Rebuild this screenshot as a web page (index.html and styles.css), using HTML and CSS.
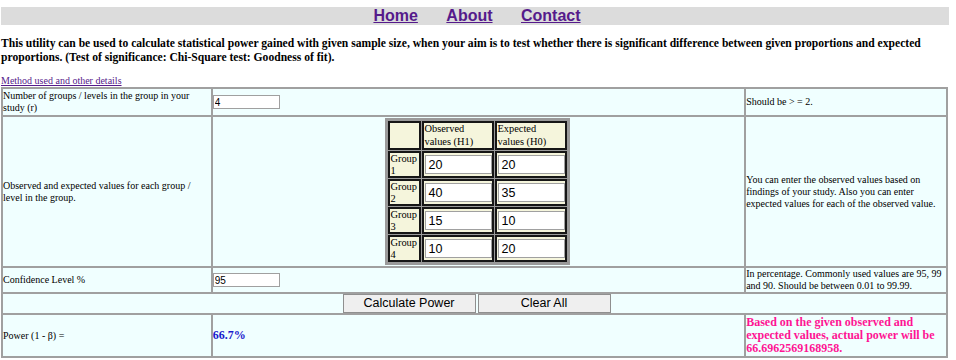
FILE: index.html
```html
<!DOCTYPE html>
<html>
<head>
<meta charset="utf-8">
<title>Statistical Power</title>
<link rel="stylesheet" href="styles.css">
</head>
<body>
<div class="page">
  <div class="nav">
    <a href="#" class="nav-link">Home</a>
    <a href="#" class="nav-link">About</a>
    <a href="#" class="nav-link">Contact</a>
  </div>
  <p class="intro">This utility can be used to calculate statistical power gained with given sample size, when your aim is to test whether there is significant difference between given proportions and expected proportions. (Test of significance: Chi-Square test: Goodness of fit).</p>
  <div class="method"><a href="#" class="method-link">Method used and other details</a></div>
  <table class="main">
    <tr class="r1">
      <td class="c1">Number of groups / levels in the group in your study (r)</td>
      <td class="c2"><input class="small-input" type="text" value="4"></td>
      <td class="c3">Should be &gt; = 2.</td>
    </tr>
    <tr>
      <td class="c1">Observed and expected values for each group / level in the group.</td>
      <td class="c2 center">
        <table class="inner">
          <tr class="ihead">
            <td class="ilabel"></td>
            <td class="ilabel">Observed<br>values (H1)</td>
            <td class="ilabel">Expected<br>values (H0)</td>
          </tr>
          <tr>
            <td class="ilabel">Group<br>1</td>
            <td class="icell"><input class="val-input" type="text" value="20"></td>
            <td class="icell"><input class="val-input" type="text" value="20"></td>
          </tr>
          <tr>
            <td class="ilabel">Group<br>2</td>
            <td class="icell"><input class="val-input" type="text" value="40"></td>
            <td class="icell"><input class="val-input" type="text" value="35"></td>
          </tr>
          <tr>
            <td class="ilabel">Group<br>3</td>
            <td class="icell"><input class="val-input" type="text" value="15"></td>
            <td class="icell"><input class="val-input" type="text" value="10"></td>
          </tr>
          <tr>
            <td class="ilabel">Group<br>4</td>
            <td class="icell"><input class="val-input" type="text" value="10"></td>
            <td class="icell"><input class="val-input" type="text" value="20"></td>
          </tr>
        </table>
      </td>
      <td class="c3">You can enter the observed values based on findings of your study. Also you can enter expected values for each of the observed value.</td>
    </tr>
    <tr class="r3">
      <td class="c1">Confidence Level %</td>
      <td class="c2"><input class="small-input" type="text" value="95"></td>
      <td class="c3">In percentage. Commonly used values are 95, 99 and 90. Should be between 0.01 to 99.99.</td>
    </tr>
    <tr>
      <td colspan="3" class="buttons"><button class="btn" type="button">Calculate Power</button><button class="btn" type="button">Clear All</button></td>
    </tr>
    <tr class="r5">
      <td class="c1">Power (1 - β) =</td>
      <td class="c2"><span class="result">66.7%</span></td>
      <td class="c3"><span class="note">Based on the given observed and expected values, actual power will be 66.6962569168958.</span></td>
    </tr>
  </table>
</div>
</body>
</html>
```

FILE: styles.css
```css
html, body {
  margin: 0;
  padding: 0;
  background: #ffffff;
}
body {
  font-family: "Liberation Serif", "Times New Roman", serif;
  color: #000;
}
.page {
  width: 948px;
  margin-left: 1px;
  padding-top: 7px;
}
.nav {
  background: #dcdcdc;
  height: 18px;
  line-height: 18px;
  text-align: center;
  font-family: "Liberation Sans", Arial, sans-serif;
  font-size: 16px;
  font-weight: bold;
  padding-left: 4px;
}
.nav-link {
  color: #551a8b;
  text-decoration: underline;
  margin: 0 12px;
}
.intro {
  margin: 12px 0 0 0;
  font-size: 11.6px;
  font-weight: bold;
  line-height: 14px;
}
.method {
  margin-top: 10px;
  font-size: 10px;
  line-height: 12px;
  height: 12px;
}
.method-link {
  color: #551a8b;
}
.main {
  width: 947px;
  border-collapse: separate;
  border-spacing: 0;
  border: 1px solid #a0a0a0;
  background: #f0ffff;
  font-size: 10px;
  line-height: 12px;
}
.main > tbody > tr > td {
  border: 1px solid #a0a0a0;
  padding: 1px 1px 1px 0;
  vertical-align: middle;
}
.main > tbody > tr.r3 > td {
  padding-top: 0;
  padding-bottom: 0;
}
.c1 { width: 207px; }
.c2 { width: 531px; }
.c3 { width: 199px; }
.center { text-align: center; }
.small-input {
  width: 63px;
  height: 12px;
  border: 1px solid #a0a0a0;
  padding: 0 1px;
  margin: 0;
  font-family: "Liberation Sans", Arial, sans-serif;
  font-size: 10px;
  background: #fff;
  vertical-align: middle;
}
.inner {
  margin: 0 auto;
  border: 2px solid #9a9a9a;
  border-collapse: separate;
  border-spacing: 1px;
  background: #9a9a9a;
  text-align: left;
  font-size: 10.4px;
  line-height: 11.5px;
}
.inner td {
  border: 2px solid #161616;
  background: #f5f5dc;
  padding: 0;
  height: 23px;
}
.ilabel { vertical-align: top; }
.ihead .ilabel {
  height: 24px;
  line-height: 12.5px;
  vertical-align: middle;
}
.inner td:nth-child(1) { width: 29px; }
.inner td:nth-child(2),
.inner td:nth-child(3) { width: 68px; }
.icell { vertical-align: middle; }
.val-input {
  display: block;
  box-sizing: border-box;
  width: 67px;
  height: 19px;
  border: 1px solid #a0a0a0;
  padding: 0 2px;
  margin: 0 0 0 1px;
  font-family: "Liberation Sans", Arial, sans-serif;
  font-size: 12.5px;
  background: #fff;
}
.main > tbody > tr > td.buttons {
  text-align: center;
  padding: 0 0 0 4px;
  font-size: 0;
  line-height: 0;
}
.btn {
  display: inline-block;
  vertical-align: top;
  width: 133px;
  height: 19px;
  margin: 0 1px;
  padding: 0;
  font-family: "Liberation Sans", Arial, sans-serif;
  font-size: 12.5px;
  line-height: 17px;
  background: #efefef;
  border: 1px solid #8f8f8f;
  color: #000;
}
.r5 td { line-height: 13px; }
.result {
  color: #1a1acd;
  font-weight: bold;
  font-size: 12px;
}
.note {
  color: #ff1493;
  font-weight: bold;
  font-size: 12px;
}
```
